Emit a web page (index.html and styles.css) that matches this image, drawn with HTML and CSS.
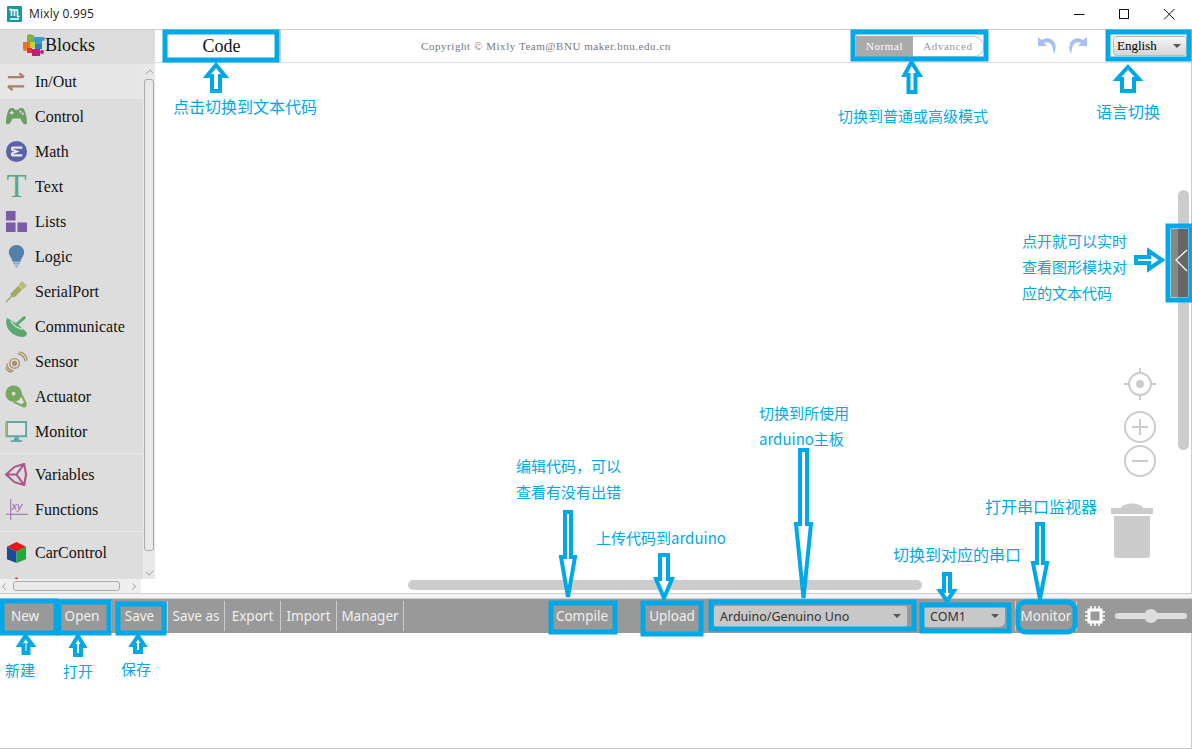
FILE: index.html
```html
<!DOCTYPE html>
<html lang="zh">
<head>
<meta charset="utf-8">
<title>Mixly 0.995</title>
<link rel="stylesheet" href="styles.css">
</head>
<body>
<div class="app">
  <header class="titlebar">
    <svg class="logo" width="15" height="16" viewBox="0 0 15 16"><rect width="15" height="16" rx="1" fill="#159a9c"/><path d="M2.500 4c2-1.500 2 0 2 2v4M4.500 5c1.500-2 3-1.500 3 .5V10M7.500 5c1.500-2 3-1.500 3 .5V10c0 1 1 1 2 0" fill="none" stroke="#fff" stroke-width="1.600"/><path d="M3 13h9" stroke="#fff" stroke-width="1.500"/></svg>
    <span class="app-name">Mixly 0.995</span>
    <div class="winctl">
      <svg width="12" height="12" viewBox="0 0 12 12"><path d="M1 6.500h10.500" stroke="#111" fill="none"/></svg>
      <svg width="12" height="12" viewBox="0 0 12 12"><rect x="1.500" y="1.500" width="9" height="9" stroke="#111" fill="none"/></svg>
      <svg width="12" height="12" viewBox="0 0 12 12"><path d="M1 1l10.500 10.500M11.500 1L1 11.500" stroke="#111" fill="none"/></svg>
    </div>
  </header>

  <div class="main">
    <aside class="sidebar">
      <div class="blocks-tab">
        <svg width="23" height="23" viewBox="0 0 23 23">
          <rect x="5" y="1" width="7" height="7" fill="#7fb23a"/><rect x="12" y="3" width="8" height="7" fill="#3a9bd0"/>
          <rect x="1" y="8" width="7" height="6" fill="#e8722a"/><rect x="8" y="8" width="5" height="6" fill="#c8d030"/>
          <rect x="13" y="10" width="7" height="5" fill="#2f7fb0"/><rect x="5" y="14" width="5" height="5" fill="#e03030"/>
          <rect x="10" y="15" width="8" height="7" fill="#c01e78"/>
          <circle cx="21" cy="5" r="2" fill="#3a9bd0"/><circle cx="3" cy="15" r="2" fill="#e8722a"/><circle cx="8" cy="2" r="2" fill="#7fb23a"/><circle cx="20" cy="18" r="2" fill="#c01e78"/>
        </svg>
        <span>Blocks</span>
      </div>
      <div class="cat-row">
        <ul class="cats">
          <li class="cat is-active"><svg class="ico" viewBox="0 0 24 24"><path d="M3 7.500h16M15 3.500l5 4M3 17h17M8 21l-5-4" fill="none" stroke="#a9806a" stroke-width="2.400"/></svg>In/Out</li>
          <li class="cat"><svg class="ico" viewBox="0 0 24 24"><path d="M6 3h3l1 2h4l1-2h3c3 0 5 11 5 15 0 3-3 3-5 0l-2-4H8l-2 4c-2 3-5 3-5 0C1 14 3 3 6 3z" fill="#6b9e64"/><path d="M7 6v4M5 8h4" stroke="#ddd" stroke-width="1.500"/><circle cx="16" cy="7" r="1.200" fill="#ddd"/><circle cx="18.500" cy="9" r="1.200" fill="#ddd"/></svg>Control</li>
          <li class="cat"><svg class="ico" viewBox="0 0 24 24"><circle cx="12" cy="12" r="11" fill="#5b62a8"/><path d="M18 8H8c-1 0-1 2 0 2.500l4 1.500-4 1.500c-1 .5-1 2.500 0 2.500h10" fill="none" stroke="#e8e8f2" stroke-width="2.200"/></svg>Math</li>
          <li class="cat"><span class="ico-t">T</span>Text</li>
          <li class="cat"><svg class="ico" viewBox="0 0 24 24"><path d="M1 1h10v10H1zM1 13h10v10H1zM13 13h10v10H13z" fill="#7b5ba6"/></svg>Lists</li>
          <li class="cat"><svg class="ico" viewBox="0 0 24 24"><path d="M12 0c4.500 0 8 3.500 8 7.500 0 4-3 5.500-4 10H8c-1-4.500-4-6-4-10C4 3.500 7.500 0 12 0z" fill="#5580aa"/><path d="M8.500 19h7M9.500 21h5M11 23h2" stroke="#8aa8c8" stroke-width="1.500"/></svg>Logic</li>
          <li class="cat"><svg class="ico" viewBox="0 0 24 24"><path d="M1 23l7-7" stroke="#a3a85c" stroke-width="1.500"/><path d="M6 14l8-8 4 4-8 8-4-1z" fill="#a3a85c"/><path d="M14 5l4-4 5 5-4 4z" fill="#b8bc78"/></svg>SerialPort</li>
          <li class="cat"><svg class="ico" viewBox="0 0 24 24"><path d="M2 3c-3 8 3 19 16 20 3 0 5-2 5-4C20 14 10 7 2 3z" fill="#5aa870"/><path d="M6 6c3 6 8 8 13 9" stroke="#ddd" stroke-width="1.500" fill="none"/><path d="M11 11l10-9" stroke="#5aa870" stroke-width="3"/></svg>Communicate</li>
          <li class="cat"><svg class="ico" viewBox="0 0 24 24" fill="none" stroke="#a9906a" stroke-width="1.500"><circle cx="10" cy="14" r="5"/><circle cx="10" cy="14" r="2" fill="#a9906a"/><path d="M13 4c4 0 8 4 8 8M15 2c4 0 8 4 8 9M2 14c0 4 3 7 7 8M1 18c1 3 3 5 6 5"/></svg>Sensor</li>
          <li class="cat"><svg class="ico" viewBox="0 0 24 24"><circle cx="9" cy="9" r="8.500" fill="#76a85e"/><circle cx="9" cy="9" r="2" fill="#ddd"/><path d="M9 17.500l11 5M15 6l7 14" stroke="#76a85e" stroke-width="2"/><circle cx="20" cy="21" r="2.500" fill="#76a85e"/></svg>Actuator</li>
          <li class="cat"><svg class="ico" viewBox="0 0 24 24"><path d="M2 2h20v15H2z" fill="#e6e6e6" stroke="#5ea8a8" stroke-width="2"/><path d="M1 2v15" stroke="#a8b878" stroke-width="2"/><path d="M10 18h4l1 3h3v2H6v-2h3z" fill="#5ea8a8"/></svg>Monitor</li>
          <li class="sep"></li>
          <li class="cat"><svg class="ico" viewBox="0 0 24 24" fill="none" stroke="#a85a88" stroke-width="2.200"><path d="M1 12L10 4 20 1l2 11-2 11-10-3zM20 1l-8 11 8 11M12 12H1"/></svg>Variables</li>
          <li class="cat"><svg class="ico" viewBox="0 0 24 24"><path d="M6 1v22M1 17h23" stroke="#9a62a8" fill="none"/><text x="7" y="13" class="xy">xy</text></svg>Functions</li>
          <li class="sep"></li>
          <li class="cat"><svg class="ico" viewBox="0 0 24 24"><path d="M12 1l10 5-10 5L2 6z" fill="#e81818"/><path d="M2 6l10 5v12L2 19z" fill="#1a4a9a"/><path d="M22 6l-10 5v12l10-4z" fill="#20a838"/></svg>CarControl</li>
          <li class="cat"><svg class="ico" viewBox="0 0 24 24"><circle cx="12" cy="3" r="1.500" fill="#e81818"/></svg></li>
        </ul>
        <div class="vscroll"><span class="sb-up"></span><span class="sb-thumb"></span><span class="sb-down"></span></div>
      </div>
      <div class="hscroll"><span class="sb-left"></span><span class="sb-hthumb"></span><span class="sb-right"></span></div>
    </aside>

    <section class="content">
      <div class="tabbar">
        <div class="code-tab">Code</div>
        <div class="copyright">Copyright © Mixly Team@BNU maker.bnu.edu.cn</div>
        <div class="switch"><span class="sw-on">Normal</span><span class="sw-off">Advanced</span></div>
        <div class="history">
          <svg width="22" height="20" viewBox="0 0 22 20"><path d="M2 1v9h9L8 7c4-2 8 0 9 6l1 5c3-6 2-12-3-15-3-1-6-1-9 1z" fill="#a8c0ee"/></svg>
          <svg width="22" height="20" viewBox="0 0 22 20"><path d="M20 1v9h-9l3-3c-4-2-8 0-9 6l-1 5C1 12 2 6 7 3c3-1 6-1 9 1z" fill="#a8c0ee"/></svg>
        </div>
        <div class="lang"><span>English</span><i class="caret"></i></div>
      </div>
      <div class="workspace"></div>
    </section>
  </div>

  <div class="splitter"></div>

  <nav class="toolbar">
    <div class="tb-group">
      <span class="tb tb-new">New</span><span class="tb tb-open">Open</span><span class="tb tb-save">Save</span><span class="tb tb-saveas">Save as</span><span class="tb tb-export">Export</span><span class="tb tb-import">Import</span><span class="tb tb-manager">Manager</span>
    </div>
    <span class="tb-compile">Compile</span>
    <span class="tb-upload">Upload</span>
    <div class="pick pick-board"><span>Arduino/Genuino Uno</span><i class="caret"></i></div>
    <div class="pick pick-com"><span>COM1</span><i class="caret"></i></div>
    <span class="tb-monitor">Monitor</span>
    <svg class="chip" width="22" height="22" viewBox="0 0 22 22"><rect x="5" y="5" width="12" height="12" fill="none" stroke="#fff" stroke-width="3"/><path d="M7 1v3M11 1v3M15 1v3M7 18v3M11 18v3M15 18v3M1 7h3M1 11h3M1 15h3M18 7h3M18 11h3M18 15h3" stroke="#fff" stroke-width="1.500"/></svg>
    <div class="slider"><span class="knob"></span></div>
  </nav>

  <div class="output"></div>
</div>

<svg class="overlay" width="1192" height="749" viewBox="0 0 1192 749">
  <rect class="thumb" x="1178" y="190" width="11" height="260" rx="5.500"/>
  <rect class="thumb" x="408" y="580" width="514" height="10" rx="5"/>
  <rect x="1171" y="229" width="8" height="68" fill="#888"/>
  <rect x="1178" y="229" width="10" height="68" fill="#666"/>
  <path d="M1187 250l-11 10 11 11" fill="none" stroke="#fff" stroke-width="1.200"/>
  <g class="ws-ctl">
    <circle cx="1140" cy="384" r="11"/><path d="M1140 368v6M1140 394v6M1124 384h6M1150 384h6"/><circle class="dot" cx="1140" cy="384" r="4"/>
    <circle cx="1140" cy="427" r="15"/><path d="M1132 427h16M1140 419v16"/>
    <circle cx="1140" cy="461" r="15"/><path d="M1132 461h16"/>
  </g>
  <path class="can" d="M1111 508h42v6h-42zM1121 508c2-6 20-6 22 0zM1114 516h36v39c0 2-1 3-3 3h-30c-2 0-3-1-3-3z"/>

  <g class="box">
    <rect x="165" y="32" width="112" height="28"/>
    <rect x="853" y="32" width="133" height="27"/>
    <rect x="1108" y="32" width="81" height="27"/>
    <rect x="1168" y="226" width="23" height="74"/>
    <rect x="2" y="601" width="54" height="32"/>
    <rect x="59" y="602" width="50" height="31"/>
    <rect x="118" y="604" width="46" height="29"/>
    <rect x="551" y="603" width="64" height="29"/>
    <rect x="643" y="603" width="58" height="31"/>
    <rect x="711" y="602" width="203" height="27"/>
    <rect x="922" y="605" width="87" height="26"/>
    <rect x="1018" y="602" width="57" height="30" rx="8"/>
  </g>
  <g class="arrow">
    <path d="M216 65l9 11h-5v15h-8V76h-5z"/>
    <path d="M911.500 62l8 13h-4v17h-7V75h-4z"/>
    <path d="M1128 67l11 12h-5v12h-12V79h-5z"/>
    <path d="M25.500 636l7 9h-4v8h-5v-8h-4z"/>
    <path d="M78 636l6 10h-3v9h-6v-9h-3z"/>
    <path d="M138 636l6 9h-3v7h-6v-7h-3z"/>
    <path d="M565 512h6v45h4l-7 40-7-40h4z"/>
    <path d="M660 555h8v24h4l-8 19-8-19h4z"/>
    <path d="M800 450h7v74h4l-7.500 74-7.500-74h4z"/>
    <path d="M944 574h6v17h4l-7 10-7-10h4z"/>
    <path d="M1037 524h6v39h4l-7 36-7-36h4z"/>
    <path d="M1136 257h13v-6l13 9-13 9v-6h-13z"/>
  </g>
</svg>

<div class="note n-code">点击切换到文本代码</div>
<div class="note n-mode">切换到普通或高级模式</div>
<div class="note n-lang">语言切换</div>
<div class="note n-panel">点开就可以实时<br>查看图形模块对<br>应的文本代码</div>
<div class="note n-board">切换到所使用<br>arduino主板</div>
<div class="note n-compile">编辑代码&#65292;可以<br>查看有没有出错</div>
<div class="note n-upload">上传代码到arduino</div>
<div class="note n-monitor">打开串口监视器</div>
<div class="note n-com">切换到对应的串口</div>
<div class="note n-new">新建</div>
<div class="note n-open">打开</div>
<div class="note n-save">保存</div>
</body>
</html>
```
FILE: styles.css
```css
* { box-sizing: border-box; }
html, body { margin: 0; padding: 0; height: 749px; overflow: hidden; background: #fff; }
body { position: relative; font-family: "Liberation Serif", serif; color: #111; }

.app { display: flex; flex-direction: column; width: 1192px; height: 749px; }

/* title bar */
.titlebar { flex: 0 0 30px; display: flex; align-items: center; padding: 0 0 2px 7px; border-bottom: 1px solid #ccc; }
.logo { margin-right: 7px; }
.app-name { font: 12px "Open Sans", "Noto Sans", sans-serif; letter-spacing: .2px; color: #222; }
.winctl { margin-left: auto; display: flex; gap: 33px; padding-right: 17px; }

/* main */
.main { flex: 0 0 563px; min-height: 0; overflow: hidden; display: flex; }
.sidebar { flex: 0 0 155px; min-height: 0; display: flex; flex-direction: column; background: #fff; }
.blocks-tab { flex: 0 0 34px; display: flex; align-items: center; gap: 0; padding: 0 0 3px 22px; background: #ddd; font-size: 18px; }
.cat-row { flex: 1; min-height: 0; display: flex; background: #ddd; }
.cats { flex: 0 0 143px; list-style: none; margin: 0; padding: 0; overflow: hidden; }
.cat { height: 35px; display: flex; align-items: center; gap: 7px; padding-left: 5px; font-size: 16px; white-space: nowrap; }
.cat.is-active { background: #e6e6e6; }
.ico { width: 23px; height: 23px; flex: none; }
.ico-t { width: 23px; text-align: center; font-size: 33px; line-height: 35px; color: #5aa88a; flex: none; }
.xy { font: italic 11px "Liberation Sans", sans-serif; fill: #9a62a8; }
.sep { height: 8px; display: flex; align-items: center; }
.sep::after { content: ""; flex: 1; height: 1px; background: #e8e8e8; }

.vscroll { flex: 0 0 12px; display: flex; flex-direction: column; align-items: center; background: #e8e8e8; }
.sb-up, .sb-down { flex: 0 0 9px; width: 7px; height: 7px; }
.sb-up { border-top: 1px solid #999; border-left: 1px solid #999; transform: translateY(5px) rotate(45deg) scale(.7); }
.sb-down { border-bottom: 1px solid #999; border-right: 1px solid #999; transform: translateY(-3px) rotate(45deg) scale(.7); }
.sb-thumb { width: 10px; margin: 6px 0 7px; flex: 1; background: #e9e9e9; border: 1px solid #aaa; border-radius: 3px; max-height: 472px; }
.sb-down { margin-top: auto; }

.hscroll { flex: 0 0 14px; width: 141px; display: flex; align-items: center; padding: 0 2px; background: #eee; }
.sb-hthumb { width: 107px; height: 10px; margin: 0 9px 0 4px; background: #eaeaea; border: 1px solid #aaa; border-radius: 3px; }
.sb-left, .sb-right { width: 7px; height: 7px; flex: none; border-left: 1px solid #999; border-bottom: 1px solid #999; transform: rotate(45deg) scale(.7); }
.sb-right { transform: rotate(225deg) scale(.7); }

/* content */
.content { flex: 1; display: flex; flex-direction: column; min-width: 0; border-right: 1px solid #ccc; }
.tabbar { flex: 0 0 33px; display: flex; align-items: center; border-bottom: 1px solid #ddd; }
.code-tab { flex: none; width: 118px; height: 32px; margin-left: 8px; display: flex; align-items: center; justify-content: center; font-size: 18px; border-right: 1px solid #ccc; }
.copyright { flex: none; width: 530px; text-align: center; font-size: 11px; color: #777; letter-spacing: .55px; }
.switch { flex: none; display: flex; width: 128px; height: 21px; margin-left: 45px; font-size: 11px; letter-spacing: .6px; }
.sw-on { width: 57px; display: flex; align-items: center; justify-content: center; background: #aaa; color: #fff; }
.sw-off { flex: 1; display: flex; align-items: center; justify-content: center; color: #999; border: 1px solid #ccc; border-left: 0; border-radius: 0 10px 10px 0; }
.history { flex: none; display: flex; gap: 9px; margin-left: 52px; }
.lang { flex: none; width: 74px; height: 20px; margin-left: 24px; display: flex; align-items: center; justify-content: space-between; padding: 0 5px 0 3px; font-size: 13px; color: #000; border: 1px solid #bbb; border-radius: 3px; background: linear-gradient(#f6f6f6, #d4d4d4); }
.caret { width: 0; height: 0; border: 4px solid transparent; border-top: 4px solid #555; border-bottom: 0; flex: none; }
.workspace { flex: 1; }

.splitter { flex: 0 0 6px; border-top: 1px solid #ccc; border-bottom: 1px solid #ccc; background: #f4f4f4; }

/* toolbar */
.toolbar { flex: 0 0 34px; display: flex; align-items: center; background: #999; font: 13.5px "Noto Sans", "Open Sans", sans-serif; color: #f0f0f0; }
.tb-group { flex: none; display: flex; height: 100%; }
.tb { display: flex; align-items: center; justify-content: center; height: 30px; margin-top: 2px; border-right: 1px solid #ccc; }
.tb-new { width: 57px; padding-right: 7px; border-right: 0; }
.tb-open { width: 55px; padding-right: 4px; }
.tb-save { width: 56px; }
.tb-saveas { width: 57px; }
.tb-export { width: 56px; }
.tb-import { width: 56px; }
.tb-manager { width: 67px; }
.tb-compile { flex: none; margin-left: 148px; width: 60px; text-align: center; }
.tb-upload { flex: none; margin-left: 30px; width: 60px; text-align: center; }
.pick { flex: none; height: 21px; display: flex; align-items: center; justify-content: space-between; padding: 0 6px; background: #c8c8c8; color: #333; font-size: 12.5px; border-radius: 2px; }
.pick-board { width: 193px; margin-left: 12px; }
.pick-com { width: 81px; margin-left: 17px; border-radius: 2px 2px 6px 2px; }
.tb-monitor { flex: none; width: 62px; height: 30px; margin-left: 10px; display: flex; align-items: center; justify-content: center; border-left: 1px solid #ccc; border-right: 1px solid #ccc; }
.chip { margin-left: 7px; flex: none; }
.slider { position: relative; flex: none; width: 72px; height: 6px; margin-left: 9px; background: #ddd; border-radius: 3px; }
.knob { position: absolute; left: 29px; top: -4px; width: 14px; height: 14px; border-radius: 50%; background: #ddd; }

.output { flex: 1; border-right: 1px solid #ccc; border-bottom: 1px solid #ccc; }

/* annotation layer */
.overlay { position: absolute; left: 0; top: 0; pointer-events: none; }
.thumb { fill: #ccc; }
.ws-ctl { fill: none; stroke: #ccc; stroke-width: 2; }
.ws-ctl .dot { fill: #ccc; stroke: none; }
.can { fill: #ccc; }
.box rect { fill: none; stroke: #00a8e8; stroke-width: 5; }
.arrow path { fill: #fff; stroke: #00a8e8; stroke-width: 4; stroke-linejoin: miter; }

.note { position: absolute; font: 15px/26px "Noto Sans CJK SC", "Noto Sans", sans-serif; color: #00a8e8; white-space: nowrap; }
.n-code { left: 173px; top: 93px; font-size: 16px; }
.n-mode { left: 838px; top: 103px; }
.n-lang { left: 1096px; top: 98px; font-size: 16px; }
.n-panel { left: 1022px; top: 228px; }
.n-board { left: 759px; top: 400px; }
.n-compile { left: 516px; top: 453px; }
.n-upload { left: 596px; top: 525px; }
.n-monitor { left: 985px; top: 493px; font-size: 16px; }
.n-com { left: 893px; top: 541px; font-size: 16px; }
.n-new { left: 5px; top: 657px; }
.n-open { left: 63px; top: 658px; }
.n-save { left: 121px; top: 656px; }
```
